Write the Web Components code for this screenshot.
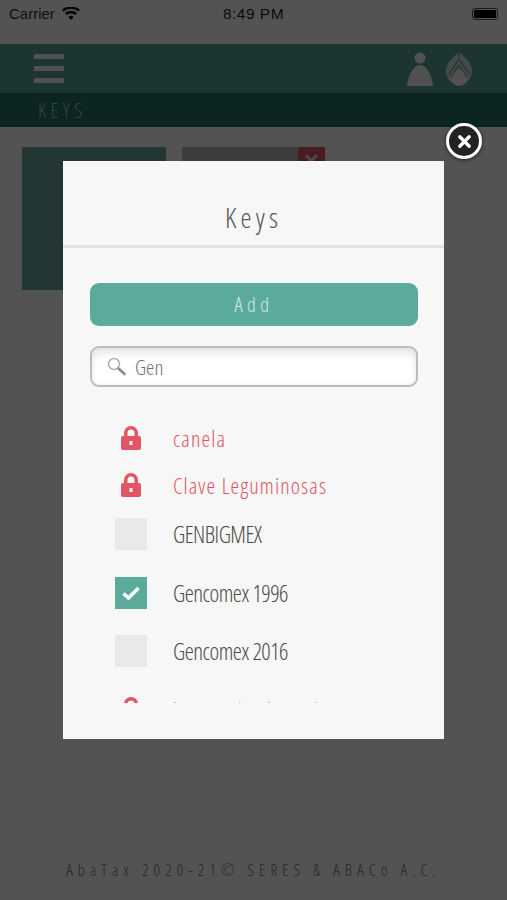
<!DOCTYPE html>
<html>
<head>
<meta charset="utf-8">
<style>
html, body { margin: 0; height: 100%; }
body { width: 507px; height: 900px; overflow: hidden; font-family: "Open Sans", "Liberation Sans", sans-serif; }
</style>
</head>
<body>
<aba-screen>
    <aba-status-bar></aba-status-bar>
    <aba-nav></aba-nav>
    <aba-title>KEYS</aba-title>
    <aba-tiles></aba-tiles>
    <aba-footer>AbaTax 2020-21© SERES &amp; ABACo A.C.</aba-footer>
</aba-screen>

<aba-modal heading="Keys">
    <aba-key state="locked">canela</aba-key>
    <aba-key state="locked">Clave Leguminosas</aba-key>
    <aba-key>GENBIGMEX</aba-key>
    <aba-key state="checked">Gencomex 1996</aba-key>
    <aba-key>Gencomex 2016</aba-key>
    <!-- row is cut off by the list, only the tops of its tallest letters show -->
    <aba-key state="locked"><svg width="150" height="30" viewBox="0 0 150 30" fill="#e15564" fill-opacity=".6" style="display:block"><rect x="1" y="8" width="1.500" height="2"/><rect x="66" y="8" width="1.500" height="2"/><rect x="95" y="8" width="1.500" height="2"/><rect x="142" y="8" width="1.500" height="2"/></svg></aba-key>
</aba-modal>

<script>
const LOCK = `<svg width="20" height="24" viewBox="0 0 20 24"><path fill="#e15564" d="M3 10V7a7 7 0 0 1 14 0v3h1a2 2 0 0 1 2 2v10a2 2 0 0 1-2 2H2a2 2 0 0 1-2-2V12a2 2 0 0 1 2-2zm3.500 0h7V7a3.500 3.500 0 0 0-7 0zM8.500 15v4h3v-4z" fill-rule="evenodd"/></svg>`;

function define(name, css, html, setup){
    customElements.define(name, class extends HTMLElement{
        constructor(){
            super();
            this.attachShadow({ mode: 'open' });
            this.shadowRoot.innerHTML = `<style>${css}</style>${html}`;
        }
        connectedCallback(){
            if(setup) setup(this);
        }
    });
}

define('aba-screen', `
    :host{ display: flex; flex-direction: column; width: 507px; height: 900px; background: #e6e6e6; }
`, `<slot></slot>`);

define('aba-status-bar', `
    :host{ display: grid; grid-template-columns: 1fr auto 1fr; align-items: center; height: 44px; box-sizing: border-box; padding: 0 9px 17px;
        font: 15px "Liberation Sans", sans-serif; color: #1c1c1c; background: #e6e6e6; }
    .left{ display: flex; align-items: center; gap: 7px; color: #2a2a2a; }
    .time{ font-size: 15.500px; letter-spacing: .5px; color: #222; }
    .battery{ display: block; justify-self: end; width: 26px; height: 12px; border: 1px solid #4a4a4a; border-radius: 3px; box-sizing: border-box; padding: 1px; }
    .battery i{ display: block; height: 100%; background: #050505; border-radius: 1px; }
`, `
    <div class="left">
        <span>Carrier</span>
        <svg width="18" height="13" viewBox="0 0 18 13"><path fill="#111" d="M9 13 6.300 9.900a4 4 0 0 1 5.400 0zM4.700 8.100 2.900 6.100a9.200 9.200 0 0 1 12.200 0l-1.800 2a6.500 6.500 0 0 0-8.600 0zM1.500 4.500 0 2.800a13.500 13.500 0 0 1 18 0l-1.500 1.700a11.300 11.300 0 0 0-15 0z"/></svg>
    </div>
    <span class="time">8:49 PM</span>
    <span class="battery"><i></i></span>
`);

define('aba-nav', `
    :host{ display: flex; align-items: center; justify-content: space-between; height: 49px; box-sizing: border-box;
        padding: 0 35px 0 34px; background: #4f9385; }
    .menu{ display: flex; flex-direction: column; gap: 7px; }
    .menu i{ display: block; width: 30px; height: 5px; background: #e0e0e0; border-radius: 1px; }
    .icons{ display: flex; align-items: center; gap: 13px; }
`, `
    <div class="menu"><i></i><i></i><i></i></div>
    <div class="icons">
        <svg width="26" height="34" viewBox="0 0 26 34"><circle cx="13" cy="6" r="5.500" fill="#e0e0e0"/><path fill="#e0e0e0" d="M0 34C1 24 6 13 13 13s12 11 13 21z"/></svg>
        <svg width="26" height="34" viewBox="0 0 26 34" fill="none"><path fill="#e0e0e0" fill-opacity=".75" d="M13 0C18 4 26 11 26 19a13 14 0 0 1-26 0C0 11 8 4 13 0z"/><circle cx="13" cy="26" r="8" fill="#e0e0e0"/><path stroke="#3d7a6e" stroke-width="1" d="M3 22 13 7l10 15M5 25 13 13l8 12M13 0v5"/></svg>
    </div>
`);

define('aba-title', `
    :host{ display: flex; align-items: center; height: 34px; box-sizing: border-box; padding-left: 38px; background: #22665a;
        color: #8fbcb1; font: 300 20px "Open Sans", sans-serif; font-stretch: 75%; letter-spacing: 4.500px; }
`, `<slot></slot>`);

define('aba-tiles', `
    :host{ display: flex; gap: 16px; flex: 1; padding: 20px 22px 0; align-items: flex-start; }
    .tile{ width: 144px; height: 143px; border-radius: 1px; position: relative; }
    .teal{ background: #5e9a90; }
    .grey{ background: #aaa4a4; width: 143px; }
    .x{ position: absolute; top: 0; right: 0; width: 27px; height: 27px; background: #c94f5c; color: #d8d0d0;
        display: flex; align-items: center; justify-content: center; font: bold 20px "Liberation Sans", sans-serif; }
`, `
    <div class="tile teal"></div>
    <div class="tile grey"><span class="x">✕</span></div>
`);

define('aba-footer', `
    :host{ display: block; height: 61px; box-sizing: border-box; padding-top: 20px; text-align: center; color: #6a6a6a; font: 300 16px/22px "Open Sans", sans-serif; font-stretch: 75%; letter-spacing: 5.120px; white-space: nowrap; }
`, `<slot></slot>`);

define('aba-modal', `
    :host{ position: absolute; inset: 0; display: block; background: rgba(0,0,0,.64); }
    .panel{ position: absolute; left: 63px; top: 161px; width: 381px; height: 578px; background: #f7f7f7; display: flex; flex-direction: column; }
    .close{ position: absolute; left: 446px; top: 123px; width: 36px; height: 36px; box-sizing: border-box; border: 3px solid #fff; border-radius: 50%;
        background: #222; box-shadow: 0 1px 4px rgba(0,0,0,.6); display: flex; align-items: center; justify-content: center; }
    h2{ margin: 0; height: 87px; box-sizing: border-box; padding-top: 36px; border-bottom: 3px solid #e1e1e1; text-align: center;
        font: 300 28px/40px "Open Sans", sans-serif; font-stretch: 75%; letter-spacing: 4px; color: #555; flex: none; }
    .body{ display: flex; flex-direction: column; padding: 35px 26px 0 27px; flex: none; }
    .add{ height: 43px; border-radius: 9px; background: #5bab9c; color: #cfeae3; display: flex; align-items: center; justify-content: center;
        font: 300 20px "Open Sans", sans-serif; font-stretch: 75%; letter-spacing: 4.500px; }
    .search{ margin-top: 20px; height: 41px; box-sizing: border-box; border: 2px solid #bcbcbc; border-radius: 9px; display: flex; align-items: center; gap: 8px; padding: 0 15px;
        background: #fff; box-shadow: inset 0 9px 10px -4px #e4e4e4, inset 0 0 6px #eee; color: #707070; font: 300 21px "Open Sans", sans-serif; font-stretch: 75%; }
    .list{ display: flex; flex-direction: column; height: 316px; overflow: hidden; padding: 27.500px 0 0 25px; box-sizing: border-box; flex: none; }
`, `
    <div class="panel">
        <h2></h2>
        <div class="body">
            <div class="add">Add</div>
            <div class="search">
                <svg width="20" height="20" viewBox="0 0 20 20" fill="none"><circle cx="7" cy="7" r="5.500" stroke="#b0b0b0" stroke-width="1.500"/><path d="M11.500 11.500l6 5.500" stroke="#8c8c8c" stroke-width="2.600" stroke-linecap="round"/></svg>
                <span>Gen</span>
            </div>
            <div class="list"><slot></slot></div>
        </div>
    </div>
    <div class="close">
        <svg width="15" height="15" viewBox="0 0 16 16"><path d="M3 3l10 10M13 3 3 13" stroke="#fff" stroke-width="3.600" stroke-linecap="round"/></svg>
    </div>
`, el => { el.shadowRoot.querySelector('h2').textContent = el.getAttribute('heading'); });

define('aba-key', `
    :host{ display: flex; align-items: center; height: 51px; margin-bottom: 7.500px; gap: 26px; color: #4a4a4a; font: 300 23px "Open Sans", sans-serif; font-stretch: 75%; letter-spacing: -.5px; white-space: nowrap; flex: none; }
    :host([state="locked"]){ height: 47px; margin-bottom: 0; color: #e15564; letter-spacing: 1.150px; font-size: 22px; }
    :host(:last-child){ margin-top: 1.500px; }
    .mark{ width: 32px; height: 32px; flex: none; background: #e9e9e9; display: flex; align-items: center; justify-content: center; }
    :host([state="locked"]) .mark{ background: none; }
    :host([state="checked"]) .mark{ background: #5bab9c; }
`, `<span class="mark"></span><slot></slot>`, el => {
    const mark = el.shadowRoot.querySelector('.mark');
    const state = el.getAttribute('state');
    if(state === 'locked') mark.innerHTML = LOCK;
    if(state === 'checked') mark.innerHTML = `<svg width="20" height="16" viewBox="0 0 20 16"><path d="M2.500 8.500 7.500 13 17.500 3" fill="none" stroke="#fff" stroke-width="3.600"/></svg>`;
});
</script>
</body>
</html>
